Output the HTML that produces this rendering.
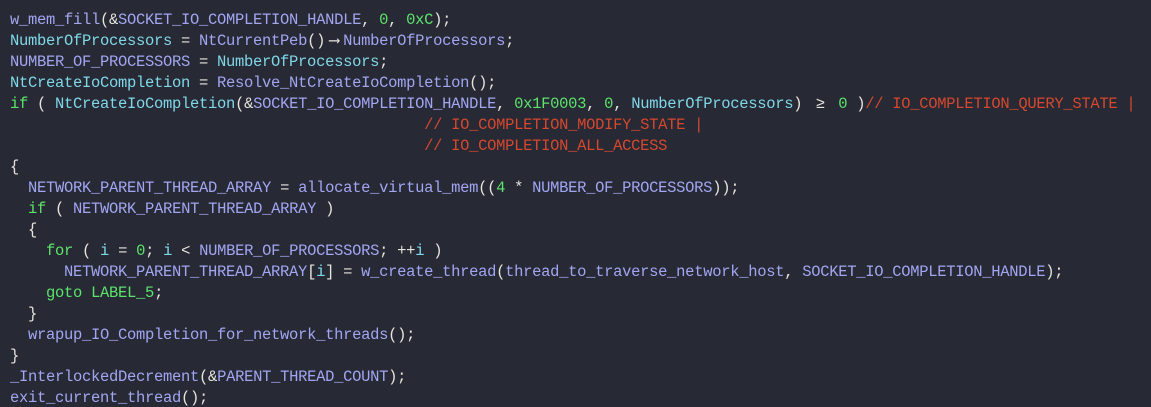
<!DOCTYPE html>
<html><head><meta charset="utf-8"><style>
html,body{margin:0;padding:0;background:#272934;width:1151px;height:407px;overflow:hidden}
pre{margin:0;padding:10px 0 0 10px;font-family:"Liberation Mono","DejaVu Sans Mono",monospace;font-size:15.5px;letter-spacing:-0.3px;line-height:21px;color:#e6e4dc;white-space:pre}
.f{color:#a2a6f2}.v{color:#7fd8e8}.n{color:#5be36b}.k{color:#5be36b}.c{color:#d6482e}
.l{display:inline-block;width:18px;text-align:center}
</style></head><body><pre><span class="f">w_mem_fill</span>(&amp;<span class="f">SOCKET_IO_COMPLETION_HANDLE</span>, <span class="n">0</span>, <span class="n">0xC</span>);
<span class="v">NumberOfProcessors</span> = <span class="f">NtCurrentPeb</span>()<span class="l">⟶</span><span class="f">NumberOfProcessors</span>;
<span class="f">NUMBER_OF_PROCESSORS</span> = <span class="v">NumberOfProcessors</span>;
<span class="v">NtCreateIoCompletion</span> = <span class="f">Resolve_NtCreateIoCompletion</span>();
<span class="k">if</span> ( <span class="v">NtCreateIoCompletion</span>(&amp;<span class="f">SOCKET_IO_COMPLETION_HANDLE</span>, <span class="n">0x1F0003</span>, <span class="n">0</span>, <span class="v">NumberOfProcessors</span>) <span class="l">≥</span> <span class="n">0</span> )<span class="c">// IO_COMPLETION_QUERY_STATE |</span>
                                              <span class="c">// IO_COMPLETION_MODIFY_STATE |</span>
                                              <span class="c">// IO_COMPLETION_ALL_ACCESS</span>
{
  <span class="f">NETWORK_PARENT_THREAD_ARRAY</span> = <span class="f">allocate_virtual_mem</span>((<span class="n">4</span> * <span class="f">NUMBER_OF_PROCESSORS</span>));
  <span class="k">if</span> ( <span class="f">NETWORK_PARENT_THREAD_ARRAY</span> )
  {
    <span class="k">for</span> ( <span class="v">i</span> = <span class="n">0</span>; <span class="v">i</span> &lt; <span class="f">NUMBER_OF_PROCESSORS</span>; ++<span class="v">i</span> )
      <span class="f">NETWORK_PARENT_THREAD_ARRAY</span>[<span class="v">i</span>] = <span class="f">w_create_thread</span>(<span class="f">thread_to_traverse_network_host</span>, <span class="f">SOCKET_IO_COMPLETION_HANDLE</span>);
    <span class="k">goto</span> <span class="k">LABEL_5</span>;
  }
  <span class="f">wrapup_IO_Completion_for_network_threads</span>();
}
<span class="f">_InterlockedDecrement</span>(&amp;<span class="f">PARENT_THREAD_COUNT</span>);
<span class="f">exit_current_thread</span>();</pre></body></html>
